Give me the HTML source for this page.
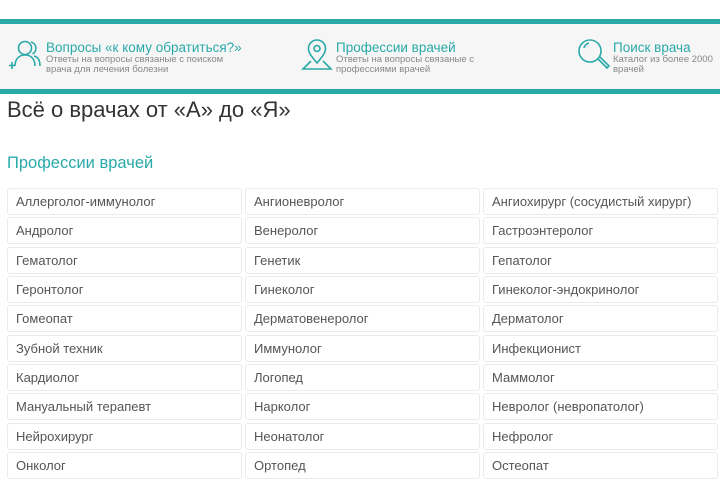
<!DOCTYPE html>
<html><head><meta charset="utf-8"><style>
*{margin:0;padding:0;box-sizing:border-box}
body{width:720px;height:480px;overflow:hidden;background:#fff;font-family:"Liberation Sans",sans-serif;position:relative}
.bar{position:absolute;left:0;width:720px;height:5px;background:#2aa9a9}
.panel{position:absolute;left:0;top:24px;width:720px;height:65px;background:#f6f6f6}
.it{position:absolute;top:16px}
.it .t{color:#2aa9a9;font-size:13.5px;line-height:15px}
.it .s{color:#888;font-size:9.5px;line-height:10px}
h1{position:absolute;left:7px;top:97px;font-size:22px;font-weight:normal;color:#333}
h2{position:absolute;left:7px;top:154px;font-size:16.5px;font-weight:normal;color:#2aa9a9}
.c{position:absolute;height:27px;width:235px;border:1px solid #ebebeb;border-radius:3px;background:#fff;color:#555;font-size:13px;line-height:25px;padding-left:8px}
</style></head><body>
<div class="bar" style="top:19px"></div>
<div class="panel">
<svg style="position:absolute;left:8px;top:15px" width="36" height="32" viewBox="0 0 36 32" fill="none" stroke="#2aa9a9" stroke-width="1.6"><circle cx="17" cy="9" r="6.5"/><path d="M7 27c0-7 4-11 10-11s10 4 10 11"/><path d="M23 3a6.5 6.5 0 0 1 1.5 12M26 17c4 1 6 4 6 10"/><path d="M4 23v7M1 26.5h6"/></svg>
<div class="it" style="left:46px"><div class="t">Вопросы «к кому обратиться?»</div><div class="s">Ответы на вопросы связаные с поиском<br>врача для лечения болезни</div></div>
<svg style="position:absolute;left:300px;top:14px" width="34" height="34" viewBox="0 0 34 34" fill="none" stroke="#2aa9a9" stroke-width="1.6"><path d="M17 25c-5-6-8.5-10-8.5-14.5a8.5 8.5 0 0 1 17 0c0 4.5-3.5 8.5-8.5 14.5z"/><circle cx="17" cy="10.5" r="3"/><path d="M11 23l-8 8h28l-8-8"/></svg>
<div class="it" style="left:336px"><div class="t">Профессии врачей</div><div class="s">Ответы на вопросы связаные с<br>профессиями врачей</div></div>
<svg style="position:absolute;left:576px;top:13px" width="36" height="36" viewBox="0 0 36 36" fill="none" stroke="#2aa9a9" stroke-width="1.6"><circle cx="14" cy="14" r="11"/><path d="M8 11a7 7 0 0 1 5-5"/><path d="M22 22l9 9 2-2-9-9"/></svg>
<div class="it" style="left:613px"><div class="t">Поиск врача</div><div class="s">Каталог из более 2000<br>врачей</div></div>
</div>
<div class="bar" style="top:89px"></div>
<h1>Всё о врачах от «А» до «Я»</h1>
<h2>Профессии врачей</h2>
<div class="c" style="left:7px;top:188px">Аллерголог-иммунолог</div>
<div class="c" style="left:245px;top:188px">Ангионевролог</div>
<div class="c" style="left:483px;top:188px">Ангиохирург (сосудистый хирург)</div>
<div class="c" style="left:7px;top:217px">Андролог</div>
<div class="c" style="left:245px;top:217px">Венеролог</div>
<div class="c" style="left:483px;top:217px">Гастроэнтеролог</div>
<div class="c" style="left:7px;top:247px">Гематолог</div>
<div class="c" style="left:245px;top:247px">Генетик</div>
<div class="c" style="left:483px;top:247px">Гепатолог</div>
<div class="c" style="left:7px;top:276px">Геронтолог</div>
<div class="c" style="left:245px;top:276px">Гинеколог</div>
<div class="c" style="left:483px;top:276px">Гинеколог-эндокринолог</div>
<div class="c" style="left:7px;top:305px">Гомеопат</div>
<div class="c" style="left:245px;top:305px">Дерматовенеролог</div>
<div class="c" style="left:483px;top:305px">Дерматолог</div>
<div class="c" style="left:7px;top:335px">Зубной техник</div>
<div class="c" style="left:245px;top:335px">Иммунолог</div>
<div class="c" style="left:483px;top:335px">Инфекционист</div>
<div class="c" style="left:7px;top:364px">Кардиолог</div>
<div class="c" style="left:245px;top:364px">Логопед</div>
<div class="c" style="left:483px;top:364px">Маммолог</div>
<div class="c" style="left:7px;top:393px">Мануальный терапевт</div>
<div class="c" style="left:245px;top:393px">Нарколог</div>
<div class="c" style="left:483px;top:393px">Невролог (невропатолог)</div>
<div class="c" style="left:7px;top:423px">Нейрохирург</div>
<div class="c" style="left:245px;top:423px">Неонатолог</div>
<div class="c" style="left:483px;top:423px">Нефролог</div>
<div class="c" style="left:7px;top:452px">Онколог</div>
<div class="c" style="left:245px;top:452px">Ортопед</div>
<div class="c" style="left:483px;top:452px">Остеопат</div>
</body></html>
